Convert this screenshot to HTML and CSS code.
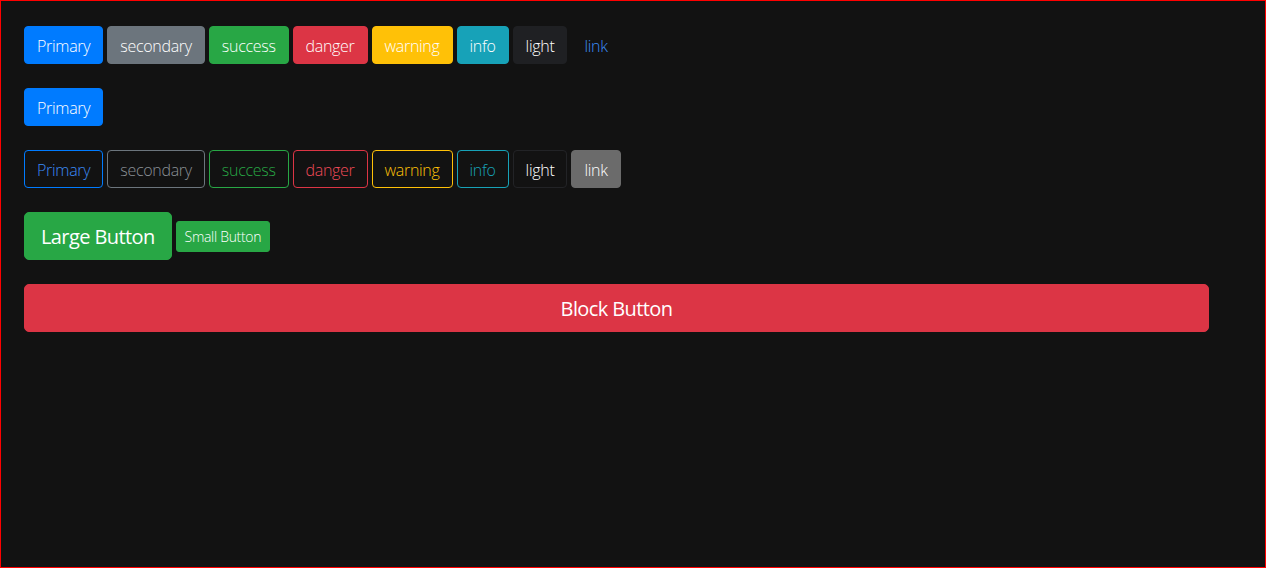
FILE: index.html
```html
<!DOCTYPE html>
<html lang="en">
<head>
    <meta charset="UTF-8">
    <meta name="viewport" content="width=device-width, initial-scale=1.0">
    <title>Buttons</title>
    <link rel="stylesheet" href="styles.css">
</head>
<body>
    <div class="page">
        <!-- Solid buttons -->
        <div class="row">
            <button class="btn btn-primary">Primary</button>
            <button class="btn btn-secondary">secondary</button>
            <button class="btn btn-success">success</button>
            <button class="btn btn-danger">danger</button>
            <button class="btn btn-warning">warning</button>
            <button class="btn btn-info">info</button>
            <button class="btn btn-light">light</button>
            <button class="btn btn-link">link</button>
        </div>

        <div class="row">
            <button class="btn btn-primary">Primary</button>
        </div>

        <!-- Outline buttons -->
        <div class="row">
            <button class="btn btn-outline-primary">Primary</button>
            <button class="btn btn-outline-secondary">secondary</button>
            <button class="btn btn-outline-success">success</button>
            <button class="btn btn-outline-danger">danger</button>
            <button class="btn btn-outline-warning">warning</button>
            <button class="btn btn-outline-info">info</button>
            <button class="btn btn-outline-light">light</button>
            <button class="btn btn-outline-link">link</button>
        </div>

        <!-- Sizes -->
        <div class="row row-sizes">
            <button class="btn btn-success btn-lg">Large Button</button>
            <button class="btn btn-success btn-sm">Small Button</button>
        </div>

        <div class="row">
            <button class="btn btn-danger btn-lg btn-block">Block Button</button>
        </div>
    </div>
</body>
</html>
```

FILE: styles.css
```css
html, body {
    margin: 0;
    height: 100%;
}
body {
    box-sizing: border-box;
    border: 1px solid #ff0000;
    background-color: #121212;
    font-family: "Open Sans", "Noto Sans", sans-serif;
    font-weight: 300;
}
.page {
    width: 1185px;
    padding: 25px 23px;
}
.row {
    display: flex;
    align-items: center;
    gap: 4px;
    margin-bottom: 24px;
}
.btn {
    font-family: inherit;
    font-weight: 300;
    font-size: 16px;
    line-height: 24px;
    letter-spacing: -0.3px;
    padding: 7px 12px 5px;
    border: 1px solid transparent;
    border-radius: 4px;
    color: #fff;
    background: transparent;
    cursor: pointer;
}
.btn-primary { background-color: #007bff; border-color: #007bff; }
.btn-secondary { background-color: #6c757d; border-color: #6c757d; }
.btn-success { background-color: #28a745; border-color: #28a745; }
.btn-danger { background-color: #dc3545; border-color: #dc3545; }
.btn-warning { background-color: #ffc107; border-color: #ffc107; }
.btn-info { background-color: #17a2b8; border-color: #17a2b8; }
.btn-light { background-color: #1f2023; border-color: #1f2023; }
.btn-link { color: #3b8bf5; }

.btn-outline-primary { border-color: #007bff; color: #3b8bf5; }
.btn-outline-secondary { border-color: #6c757d; color: #8a9096; }
.btn-outline-success { border-color: #28a745; color: #28a745; }
.btn-outline-danger { border-color: #dc3545; color: #ee4a58; }
.btn-outline-warning { border-color: #ffc107; color: #ffc107; }
.btn-outline-info { border-color: #17a2b8; color: #17a2b8; }
.btn-outline-light { border-color: #222326; color: #fff; }
.btn-outline-link { background-color: #6b6b6b; border-color: #6b6b6b; }

.btn-lg {
    font-size: 20px;
    line-height: 30px;
    letter-spacing: -0.6px;
    padding: 9px 16px 7px;
    border-radius: 5px;
    font-weight: 400;
}
.btn-sm {
    font-size: 14px;
    line-height: 21px;
    padding: 4px 8px;
    border-radius: 3px;
}
.btn-block {
    width: 100%;
}
```
